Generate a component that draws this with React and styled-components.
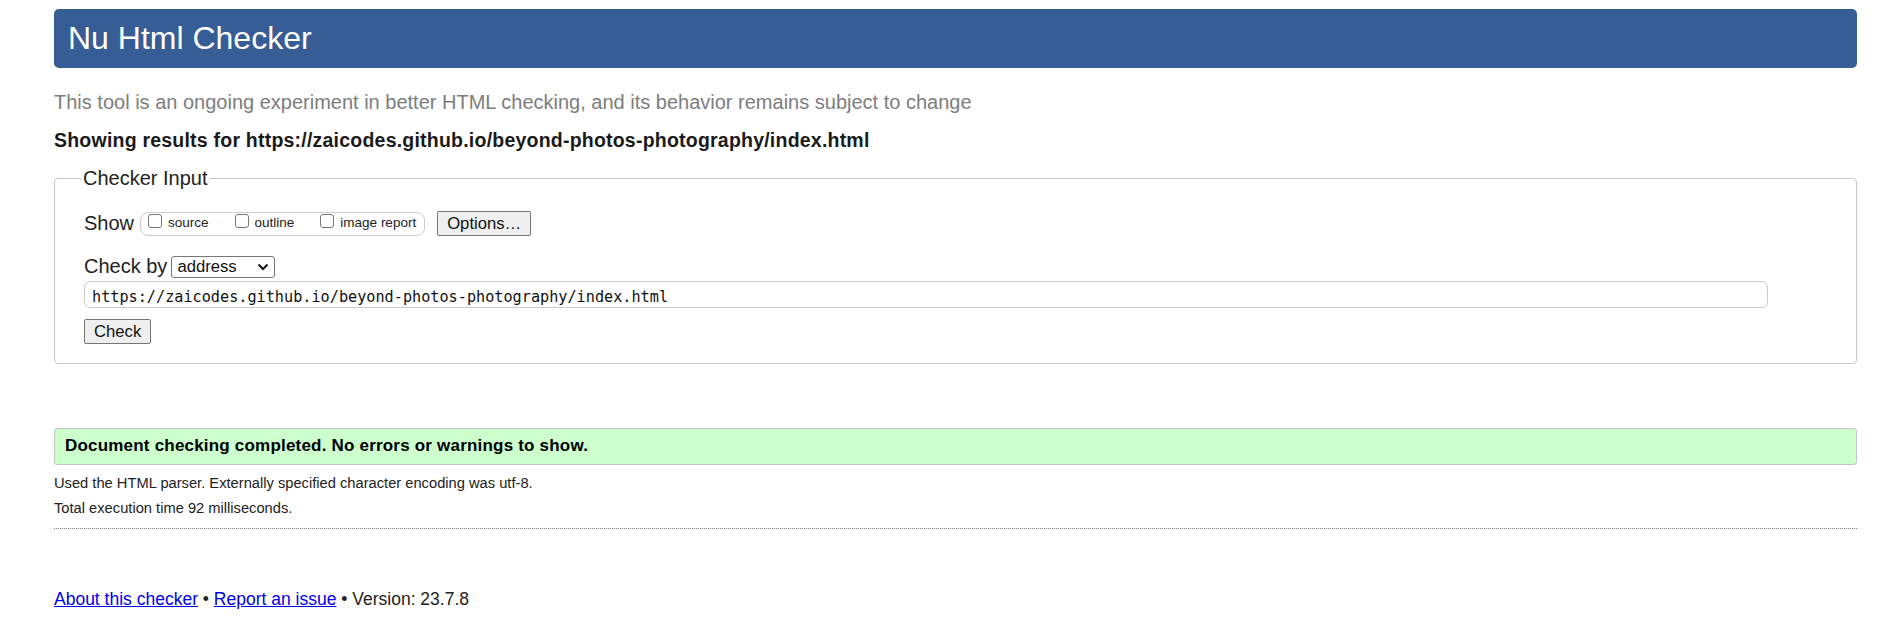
import React from 'react'
import styled, { createGlobalStyle } from 'styled-components'

const GlobalStyle = createGlobalStyle`
  body {
    margin: 0;
    background: #fff;
    color: #222;
    font-family: "Liberation Sans", Arial, Helvetica, sans-serif;
  }
`

const StyledPage = styled.div`
  padding: 9px 28px 0 54px;
`

const StyledHeader = styled.h1`
  margin: 0;
  height: 59px;
  display: flex;
  align-items: center;
  padding-left: 14px;
  background: #365d95;
  border-radius: 5px;
  color: #fff;
  font-size: 32px;
  font-weight: normal;
`

const StyledLede = styled.p`
  margin: 22px 0 0;
  font-size: 20px;
  line-height: 24px;
  color: #7d7d7d;
`

const StyledResultsFor = styled.h2`
  margin: 14px 0 0;
  font-size: 19.5px;
  line-height: 24px;
  letter-spacing: 0.22px;
  font-weight: bold;
  color: #1a1a1a;
`

const StyledFieldset = styled.fieldset`
  margin: 15px 0 0;
  padding: 21px 29px 19px 29px;
  border: 1px solid #c8c8c8;
  border-radius: 4px;
`

const StyledLegend = styled.legend`
  margin-left: -3px;
  padding: 0 2px;
  font-size: 20px;
  color: #222;
`

const StyledRow = styled.div`
  display: flex;
  align-items: center;
  margin-top: ${p => p.$gap || 0}px;
`

const StyledLabel = styled.span`
  font-size: 20px;
  margin-right: ${p => p.$space || 6}px;
`

const StyledOptionGroup = styled.div`
  display: flex;
  align-items: flex-start;
  box-sizing: border-box;
  height: 24px;
  padding: 0 8px 0 7px;
  gap: 26px;
  border: 1px solid #cdcdcd;
  border-radius: 8px;
`

const StyledOption = styled.label`
  display: flex;
  align-items: flex-start;
  gap: 6px;
  font-size: 13.5px;
  line-height: 16px;
`

const StyledCheckbox = styled.input`
  appearance: none;
  box-sizing: border-box;
  width: 14px;
  height: 14px;
  margin: 1px 0 0;
  border: 1px solid #767676;
  border-radius: 3px;
  background: #fff;
`

const StyledOptionText = styled.span`
  margin-top: 2px;
`

const StyledButton = styled.button`
  box-sizing: border-box;
  height: 25px;
  padding: 0 ${p => p.$pad || 9}px;
  margin-left: ${p => p.$offset || 0}px;
  background: #efefef;
  border: 1px solid #767676;
  border-radius: 2px;
  color: #111;
  font-family: "Liberation Sans", Arial, sans-serif;
  font-size: 16.67px;
`

const StyledSelectWrap = styled.div`
  position: relative;
  width: 104px;
  height: 22px;
`

const StyledSelect = styled.select`
  appearance: none;
  box-sizing: border-box;
  width: 100%;
  height: 100%;
  padding: 0 0 0 5px;
  border: 1px solid #767676;
  border-radius: 3px;
  background: #fff;
  color: #111;
  font-family: "Liberation Sans", Arial, sans-serif;
  font-size: 16.67px;
`

const StyledChevron = styled.svg`
  position: absolute;
  right: 6px;
  top: 7px;
  pointer-events: none;
`

const StyledUrl = styled.input`
  display: block;
  box-sizing: border-box;
  width: 1684px;
  height: 27px;
  margin-top: 3px;
  padding: 5px 0 0 7px;
  border: 1px solid #cccccc;
  border-radius: 6px;
  color: #111;
  font-family: "DejaVu Sans Mono", "Liberation Mono", monospace;
  font-size: 15.2px;
`

const StyledSuccess = styled.p`
  margin: 64px 0 0;
  box-sizing: border-box;
  height: 37px;
  display: flex;
  align-items: center;
  padding: 0 0 1px 10px;
  background: #ccffcc;
  border: 1px solid #c4c4c4;
  border-radius: 3px;
  font-size: 17px;
  letter-spacing: 0.2px;
  font-weight: bold;
  color: #000;
`

const StyledDetails = styled.div`
  margin-top: 6px;
  font-size: 14.7px;
  line-height: 25.4px;
`

const StyledDetail = styled.p`
  margin: 0;
`

const StyledRule = styled.hr`
  margin: 6px 0 0;
  border: 0;
  border-top: 1px dotted #7a7a7a;
`

const StyledFooter = styled.p`
  margin: 58px 0 0;
  font-size: 17.5px;
  line-height: 24px;
  color: #222;
`

const StyledLink = styled.a`
  color: #0000ee;
  text-decoration: underline;
`

const options = ['source', 'outline', 'image report']

const App = () => (
  <StyledPage>
    <GlobalStyle />
    <StyledHeader>Nu Html Checker</StyledHeader>
    <StyledLede>
      This tool is an ongoing experiment in better HTML checking, and its behavior remains subject to change
    </StyledLede>
    <StyledResultsFor>
      Showing results for https://zaicodes.github.io/beyond-photos-photography/index.html
    </StyledResultsFor>
    <StyledFieldset>
      <StyledLegend>Checker Input</StyledLegend>
      <StyledRow>
        <StyledLabel>Show</StyledLabel>
        <StyledOptionGroup>
          {options.map(o => (
            <StyledOption key={o}>
              <StyledCheckbox type="checkbox" />
              <StyledOptionText>{o}</StyledOptionText>
            </StyledOption>
          ))}
        </StyledOptionGroup>
        <StyledButton type="button" $offset={12}>Options…</StyledButton>
      </StyledRow>
      <StyledRow $gap={19}>
        <StyledLabel $space={4}>Check by</StyledLabel>
        <StyledSelectWrap>
          <StyledSelect defaultValue="address">
            <option value="address">address</option>
            <option value="file">file upload</option>
            <option value="text">text input</option>
          </StyledSelect>
          <StyledChevron width="12" height="8" viewBox="0 0 12 8">
            <path d="M1.5 1.5 L6 6 L10.5 1.5" fill="none" stroke="#111" strokeWidth="2" />
          </StyledChevron>
        </StyledSelectWrap>
      </StyledRow>
      <StyledUrl
        type="url"
        defaultValue="https://zaicodes.github.io/beyond-photos-photography/index.html"
      />
      <StyledRow $gap={11}>
        <StyledButton type="submit" $pad={9}>Check</StyledButton>
      </StyledRow>
    </StyledFieldset>
    <StyledSuccess>Document checking completed. No errors or warnings to show.</StyledSuccess>
    <StyledDetails>
      <StyledDetail>Used the HTML parser. Externally specified character encoding was utf-8.</StyledDetail>
      <StyledDetail>Total execution time 92 milliseconds.</StyledDetail>
    </StyledDetails>
    <StyledRule />
    <StyledFooter>
      <StyledLink href="#about">About this checker</StyledLink>
      {' • '}
      <StyledLink href="#report">Report an issue</StyledLink>
      {' • Version: 23.7.8'}
    </StyledFooter>
  </StyledPage>
)

export default App
